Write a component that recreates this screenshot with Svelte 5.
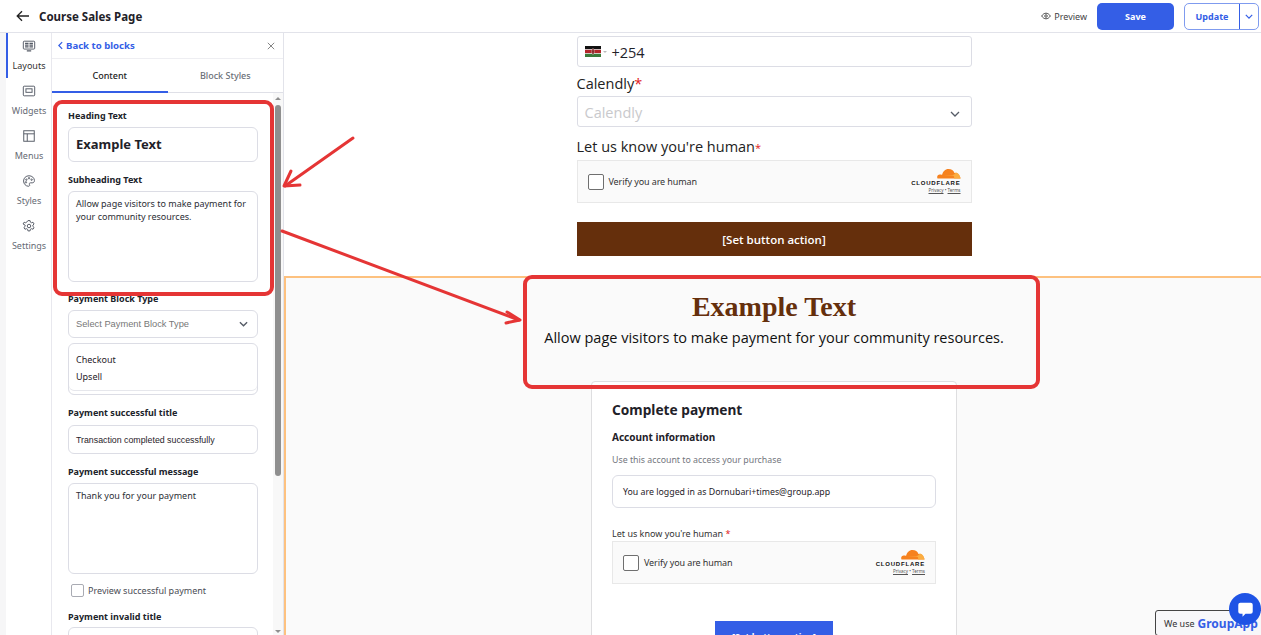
<script>
    const rail_items = [
        { name: "Layouts", icon: "layouts", active: true },
        { name: "Widgets", icon: "widgets" },
        { name: "Menus", icon: "menus" },
        { name: "Styles", icon: "styles" },
        { name: "Settings", icon: "settings" }
    ];
</script>

{#snippet cloudflare()}
    <div class="cf">
        <svg class="cf-cloud" viewBox="0 0 50 22" width="25" height="11">
            <path d="M3 21c-2-5 1-8 6-8 1 0 2 0 3 1 2-7 6-12 13-12 6 0 10 3 12 8 5-1 11 3 12 11z" fill="#f6821f"/>
            <path d="M36 21c1-4 0-6-4-6l-17-.3 18-.7c3 0 5-2 6-5 4 0 9 4 10 12z" fill="#fbad41"/>
        </svg>
        <span class="cf-name">CLOUDFLARE</span>
        <span class="cf-links"><u>Privacy</u> • <u>Terms</u></span>
    </div>
{/snippet}

{#snippet turnstile()}
    <div class="turnstile">
        <span class="ts-box"></span>
        <span class="ts-text">Verify you are human</span>
        {@render cloudflare()}
    </div>
{/snippet}

{#snippet rail_icon(kind)}
    <svg viewBox="0 0 16 16" width="14" height="14" fill="none" stroke="#555b66" stroke-width="1.1">
        {#if kind === "layouts"}
            <rect x="1.5" y="2.5" width="13" height="9" rx="1"/>
            <path d="M3.5 5h4M8.5 5h4M3.5 7h4M8.5 7h4M3.5 9h4M8.5 9h4M5.5 13.5h5" stroke-width="1.3"/>
        {:else if kind === "widgets"}
            <rect x="1.5" y="2.5" width="13" height="11" rx="1"/>
            <rect x="4.5" y="5.5" width="7" height="4"/>
        {:else if kind === "menus"}
            <rect x="2" y="2" width="12" height="12"/>
            <path d="M2 5.5h12M6 5.5V14"/>
        {:else if kind === "styles"}
            <path d="M8 2C4.5 2 1.8 4.6 1.8 8s2.7 6 5.6 6c1.3 0 1.6-1 1.1-1.9-.5-1 0-2 1.2-2h2c1.500 0 2.500-1 2.500-2.600C14.200 4.500 11.500 2 8 2z"/>
            <circle cx="5" cy="6.500" r=".8"/><circle cx="8" cy="4.800" r=".8"/><circle cx="11" cy="6.500" r=".8"/><circle cx="4.500" cy="9.500" r=".8"/>
        {:else}
            <path d="M6.800 1.800h2.400l.4 1.800 1.200.7 1.800-.6 1.200 2-1.400 1.300v1.400l1.400 1.300-1.200 2-1.800-.6-1.200.7-.4 1.800H6.800l-.4-1.800-1.200-.7-1.800.6-1.200-2 1.400-1.300V7.000L1.200 5.700l1.200-2 1.800.6 1.200-.7z"/>
            <circle cx="8" cy="8" r="2"/>
        {/if}
    </svg>
{/snippet}

<div class="page">
    <header class="topbar">
        <svg class="back" viewBox="0 0 14 12" width="14" height="12" fill="none" stroke="#222" stroke-width="1.300">
            <path d="M13 6H1.500M6 1.200 1.200 6 6 10.800"/>
        </svg>
        <h1>Course Sales Page</h1>
        <div class="top-actions">
            <span class="preview">
                <svg viewBox="0 0 16 12" width="10" height="8" fill="none" stroke="#444" stroke-width="1.500">
                    <path d="M1 6c2-3 4.500-4.500 7-4.500S13 3 15 6c-2 3-4.500 4.500-7 4.500S3 9 1 6z"/>
                    <circle cx="8" cy="6" r="2"/>
                </svg>
                Preview
            </span>
            <button class="save">Save</button>
            <div class="update">
                <span class="update-label">Update</span>
                <span class="update-caret">
                    <svg viewBox="0 0 10 6" width="8" height="5" fill="none" stroke="#345ee6" stroke-width="1.500"><path d="M1 1l4 4 4-4"/></svg>
                </span>
            </div>
        </div>
    </header>

    <div class="workspace">
        <div class="gutter"></div>
        <nav class="rail">
            {#each rail_items as item}
                <div class="rail-item" class:active={item.active}>
                    {@render rail_icon(item.icon)}
                    <span>{item.name}</span>
                </div>
            {/each}
        </nav>

        <aside class="panel">
            <div class="panel-head">
                <span class="back-link">
                    <svg viewBox="0 0 6 10" width="5" height="9" fill="none" stroke="#345ee6" stroke-width="1.500"><path d="M5 1 1 5l4 4"/></svg>
                    Back to blocks
                </span>
                <svg viewBox="0 0 10 10" width="8" height="8" fill="none" stroke="#666" stroke-width="1"><path d="M1 1l8 8M9 1 1 9"/></svg>
            </div>
            <div class="tabs">
                <span class="tab current">Content</span>
                <span class="tab">Block Styles</span>
            </div>
            <div class="panel-body">
                <div class="fields">
                    <label class="first">Heading Text</label>
                    <div class="box heading-input">Example Text</div>
                    <label class="l-sub">Subheading Text</label>
                    <div class="box area">Allow page visitors to make payment for your community resources.</div>
                    <label class="l-type">Payment Block Type</label>
                    <div class="box select">
                        <span>Select Payment Block Type</span>
                        <svg viewBox="0 0 10 6" width="9" height="6" fill="none" stroke="#555b66" stroke-width="1.500"><path d="M1 1l4 4 4-4"/></svg>
                    </div>
                    <div class="box options">
                        <span>Checkout</span>
                        <span>Upsell</span>
                    </div>
                    <label class="l-title">Payment successful title</label>
                    <div class="box single">Transaction completed successfully</div>
                    <label class="l-msg">Payment successful message</label>
                    <div class="box area">Thank you for your payment</div>
                    <div class="check-row">
                        <span class="check"></span>
                        <span>Preview successful payment</span>
                    </div>
                    <label class="l-invalid">Payment invalid title</label>
                    <div class="box single"></div>
                </div>
                <div class="scrollbar">
                    <span class="arrow up"></span>
                    <span class="thumb"></span>
                    <span class="arrow down"></span>
                </div>
            </div>
        </aside>

        <main class="canvas">
            <div class="form-block">
                <div class="form">
                    <div class="f-input phone">
                        <svg class="flag" viewBox="0 0 16 11" width="16" height="11">
                            <rect width="16" height="3.600" fill="#111"/>
                            <rect y="3.600" width="16" height="3.800" fill="#b3262a"/>
                            <rect y="7.400" width="16" height="3.600" fill="#3a7a3a"/>
                            <path d="M0 3.500h16M0 7.500h16" stroke="#fff" stroke-width=".6"/>
                            <ellipse cx="8" cy="5.500" rx="1.300" ry="3" fill="#7d1a1a" stroke="#fff" stroke-width=".4"/>
                        </svg>
                        <i class="flag-caret"></i>
                        <span>+254</span>
                    </div>
                    <p class="f-label cal">Calendly<em>*</em></p>
                    <div class="f-input cal-select">
                        <span>Calendly</span>
                        <svg class="cal-caret" viewBox="0 0 10 6" width="10" height="6" fill="none" stroke="#555b66" stroke-width="1.300"><path d="M1 1l4 4 4-4"/></svg>
                    </div>
                    <p class="f-label human">Let us know you're human<em class="small">*</em></p>
                    {@render turnstile()}
                    <button class="action">[Set button action]</button>
                </div>
            </div>
            <section class="pay-section">
                <h2>Example Text</h2>
                <p class="pay-sub">Allow page visitors to make payment for your community resources.</p>
                <div class="pay-card">
                    <h3>Complete payment</h3>
                    <h4>Account information</h4>
                    <p class="hint">Use this account to access your purchase</p>
                    <div class="logged">You are logged in as Dornubari+times@group.app</div>
                    <p class="card-label">Let us know you're human <em>*</em></p>
                    {@render turnstile()}
                    <button class="card-action">[Set button action]</button>
                </div>
            </section>
        </main>
    </div>

    <!-- red marks drawn on top of the screenshot -->
    <svg class="marks" viewBox="0 0 1261 635" width="1261" height="635" fill="none" stroke="#e53535" stroke-width="4" stroke-linecap="round" stroke-linejoin="round">
        <rect x="55" y="102" width="217" height="192" rx="7"/>
        <rect x="525" y="277" width="513" height="110" rx="7"/>
        <g stroke-width="3">
            <path d="M353 138 285 186"/>
            <path d="M291 171 284 186 300 185"/>
            <path d="M282 231 519 320"/>
            <path d="M507 312 520 320 506 323"/>
        </g>
    </svg>

    <div class="cookie">We use <b>GroupApp</b></div>
    <div class="chat">
        <svg viewBox="0 0 20 20" width="17" height="17"><path d="M4 2h12a2.500 2.500 0 0 1 2.500 2.500v8A2.500 2.500 0 0 1 16 15h-6l-3.500 3.500V15H4a2.500 2.500 0 0 1-2.500-2.500v-8A2.500 2.500 0 0 1 4 2z" fill="#fff"/></svg>
    </div>
</div>

<style>
    :global(body){
        margin: 0;
        overflow: hidden;
        background: #fff;
    }

    .page{
        position: relative;
        width: 1261px;
        height: 635px;
        overflow: hidden;
        font-family: "Noto Sans", "Open Sans", sans-serif;
        color: #1f2229;
    }

    /* top bar */
    .topbar{
        height: 32px;
        border-bottom: 1px solid #e2e3ea;
        display: flex;
        align-items: center;
        padding-left: 16px;
    }

    .topbar h1{
        font-size: 11.5px;
        font-weight: 700;
        margin: 0 0 0 9px;
    }

    .top-actions{
        margin-left: auto;
        display: flex;
        align-items: center;
        padding-right: 2px;
    }

    .preview{
        display: flex;
        align-items: center;
        gap: 3px;
        font-size: 9px;
        color: #444;
        margin-right: 10px;
    }

    .save{
        width: 77px;
        height: 27px;
        background: #345ee6;
        color: #fff;
        border: none;
        border-radius: 5px;
        font: 700 9px "Noto Sans", sans-serif;
        margin-right: 10px;
    }

    .update{
        width: 75px;
        height: 27px;
        border: 1px solid #7f9bef;
        border-radius: 5px;
        display: flex;
        box-sizing: border-box;
        color: #345ee6;
        font-size: 9px;
        font-weight: 700;
    }

    .update-label{
        flex: 1;
        display: flex;
        align-items: center;
        justify-content: center;
    }

    .update-caret{
        width: 18px;
        border-left: 1px solid #345ee6;
        display: flex;
        align-items: center;
        justify-content: center;
    }

    .workspace{
        display: flex;
        height: 602px;
    }

    .gutter{
        width: 6px;
        background: #f6f6f7;
    }

    /* icon rail */
    .rail{
        width: 45px;
        border-right: 1px solid #e8e8ee;
        display: flex;
        flex-direction: column;
    }

    .rail-item{
        height: 45px;
        display: flex;
        flex-direction: column;
        align-items: center;
        justify-content: center;
        gap: 6px;
        padding-left: 1px;
        font-size: 9px;
        color: #666b75;
        box-sizing: border-box;
    }

    .rail-item.active{
        border-left: 2px solid #345ee6;
        color: #333;
        padding-left: 0;
        padding-right: 1px;
    }

    /* editing panel */
    .panel{
        width: 231px;
        border-right: 1px solid #e2e3ea;
        display: flex;
        flex-direction: column;
        flex-shrink: 0;
        box-sizing: content-box;
    }

    .panel-head{
        height: 25px;
        border-bottom: 1px solid #eeeef2;
        display: flex;
        align-items: center;
        justify-content: space-between;
        padding: 0 8px 0 6px;
    }

    .back-link{
        display: flex;
        align-items: center;
        gap: 3px;
        color: #345ee6;
        font-size: 9.6px;
        font-weight: 700;
    }

    .tabs{
        height: 33px;
        display: flex;
        border-bottom: 1px solid #dfe0e7;
    }

    .tab{
        flex: 1;
        font-size: 9px;
        font-weight: 500;
        color: #6b6f78;
        display: flex;
        align-items: center;
        justify-content: center;
    }

    .tab.current{
        color: #222;
        border-bottom: 2px solid #345ee6;
        margin-bottom: -1px;
    }

    .panel-body{
        flex: 1;
        display: flex;
        overflow: hidden;
    }

    .fields{
        flex: 1;
        padding: 0 15px 0 16px;
        display: flex;
        flex-direction: column;
        overflow: hidden;
    }

    .fields label{
        font-size: 9px;
        font-weight: 700;
        line-height: 12px;
        color: #20232a;
    }

    .fields .first{ margin-top: 17px; margin-bottom: 5px; }
    .fields .l-sub{ margin-top: 12px; margin-bottom: 5px; }
    .fields .l-type{ margin-top: 11px; margin-bottom: 5px; }
    .fields .l-title{ margin-top: 12px; margin-bottom: 6px; }
    .fields .l-msg{ margin-top: 12px; margin-bottom: 5px; }
    .fields .l-invalid{ margin-top: 14px; margin-bottom: 4px; }

    .box{
        border: 1px solid #dcdde5;
        border-radius: 6px;
        box-sizing: border-box;
        flex-shrink: 0;
        font-size: 9px;
        padding: 0 7px;
    }

    .heading-input{
        height: 35px;
        display: flex;
        align-items: center;
        padding-bottom: 2px;
        font-size: 13px;
        font-weight: 700;
    }

    .area{
        height: 91px;
        padding-top: 6px;
        line-height: 12.500px;
        color: #2b2e35;
    }

    .select{
        height: 28px;
        display: flex;
        align-items: center;
        justify-content: space-between;
        color: #777;
        font-family: "Liberation Sans", sans-serif;
        font-size: 9.3px;
        padding-right: 9px;
    }

    .options{
        height: 52px;
        margin-top: 5px;
        padding-top: 10px;
        display: flex;
        flex-direction: column;
        gap: 5px;
        line-height: 12px;
        box-shadow: inset 0 -3px 0 #fff, inset 0 -4px 0 #e6e7ec;
    }

    .single{
        height: 29px;
        display: flex;
        align-items: center;
        font-family: "Liberation Sans", sans-serif;
        font-size: 8.8px;
    }

    .check-row{
        display: flex;
        align-items: center;
        gap: 4px;
        margin: 10px 0 0 3px;
        font-size: 9px;
        color: #4a4d55;
        height: 14px;
    }

    .check{
        width: 13px;
        height: 13px;
        border: 1px solid #a9abb3;
        border-radius: 2px;
        box-sizing: border-box;
    }

    .scrollbar{
        width: 10px;
        background: #f8f8f8;
        display: flex;
        flex-direction: column;
        align-items: center;
        flex-shrink: 0;
        padding-top: 4px;
    }

    .thumb{
        width: 6px;
        height: 371px;
        margin-top: 5px;
        background: #8f8f8f;
        border-radius: 3px;
    }

    .arrow{
        width: 0;
        height: 0;
        border-left: 3px solid transparent;
        border-right: 3px solid transparent;
    }

    .arrow.up{ border-bottom: 3px solid #8f8f8f; }
    .arrow.down{ border-top: 3px solid #8f8f8f; margin-top: auto; margin-bottom: 2px; }

    /* page preview */
    .canvas{
        flex: 1;
        display: flex;
        flex-direction: column;
        overflow: hidden;
        font-family: "Open Sans", sans-serif;
    }

    .form-block{
        height: 243px;
        flex-shrink: 0;
        display: flex;
        justify-content: center;
        padding-left: 3px;
        box-sizing: border-box;
    }

    .form{
        width: 395px;
        padding-top: 3px;
    }

    .f-input{
        height: 31px;
        border: 1px solid #dcdde5;
        border-radius: 3px;
        box-sizing: border-box;
        display: flex;
        align-items: center;
        font-size: 14.5px;
        padding: 0 7px;
    }

    .flag{
        margin-right: 2px;
    }

    .flag-caret{
        width: 0;
        height: 0;
        border-left: 2px solid transparent;
        border-right: 2px solid transparent;
        border-top: 2px solid #bbb;
        margin-right: 5px;
    }

    .phone span{
        padding-top: 1px;
    }

    .cal-select{
        justify-content: space-between;
        color: #c9c9cc;
        padding-right: 11px;
    }

    .cal-select span{
        padding-top: 1px;
    }

    .cal-caret{
        margin-top: 5px;
    }

    .f-label{
        margin: 0;
        font-size: 14.5px;
        line-height: 20px;
        color: #222;
    }

    .f-label em, .card-label em{
        color: #e02020;
        font-style: normal;
    }

    .f-label em.small{
        font-size: 11px;
    }

    .cal{ margin-top: 7px; margin-bottom: 2px; }
    .human{ margin-top: 10px; margin-bottom: 2px; }

    .turnstile{
        height: 43px;
        background: #fafafa;
        border: 1px solid #e8e8e8;
        box-sizing: border-box;
        display: flex;
        align-items: center;
        padding: 0 10px;
        font-family: "Noto Sans", sans-serif;
    }

    .ts-box{
        width: 16px;
        height: 16px;
        border: 1px solid #6f6f6f;
        border-radius: 2px;
        box-sizing: border-box;
        background: #fff;
        margin-right: 5px;
    }

    .ts-text{
        font-size: 9px;
        color: #333;
        letter-spacing: -.1px;
    }

    .cf{
        margin-left: auto;
        display: flex;
        flex-direction: column;
        align-items: flex-end;
        line-height: 1;
        margin-top: -3px;
    }

    .cf-cloud{
        display: block;
    }

    .cf-name{
        font: 700 6px "Liberation Sans", sans-serif;
        letter-spacing: .8px;
        color: #111;
        margin-top: 1px;
    }

    .cf-links{
        font-size: 4.500px;
        color: #555;
        margin-top: 2px;
    }

    .action{
        display: block;
        width: 100%;
        height: 34px;
        margin-top: 19px;
        border: none;
        background: #652f0c;
        color: #fff;
        font: 600 11.5px "Open Sans", sans-serif;
    }

    .pay-section{
        flex: 1;
        background: #fafafa;
        border-top: 2px solid #fdc17f;
        border-left: 2px solid #fdc17f;
        display: flex;
        flex-direction: column;
        align-items: center;
        box-sizing: border-box;
        padding-left: 1px;
    }

    .pay-section h2{
        margin: 12px 0 0;
        font: 700 28px/34px "Liberation Serif", serif;
        color: #652f0c;
    }

    .pay-sub{
        margin: 4px 0 0;
        font-size: 14.5px;
        line-height: 20px;
        color: #111;
    }

    .pay-card{
        width: 366px;
        height: 300px;
        flex-shrink: 0;
        margin-top: 33px;
        background: #fff;
        border: 1px solid #dedee0;
        border-radius: 4px;
        box-sizing: border-box;
        padding: 0 20px;
        font-family: "Noto Sans", sans-serif;
    }

    .pay-card h3{
        margin: 19px 0 0;
        font-size: 13.7px;
        line-height: 18px;
        font-weight: 700;
    }

    .pay-card h4{
        margin: 11px 0 0;
        font-size: 10px;
        line-height: 14px;
        font-weight: 700;
    }

    .hint{
        margin: 10px 0 0;
        font-size: 8.8px;
        line-height: 12px;
        color: #73767d;
    }

    .logged{
        margin-top: 9px;
        height: 33px;
        border: 1px solid #dcdde5;
        border-radius: 6px;
        box-sizing: border-box;
        display: flex;
        align-items: center;
        padding: 0 10px;
        font-size: 8.8px;
    }

    .card-label{
        margin: 20px 0 1px;
        font-size: 9px;
        line-height: 12px;
        color: #333;
    }

    .card-action{
        display: block;
        width: 118px;
        height: 30px;
        margin: 37px auto 0;
        border: none;
        background: #345ee6;
        color: #fff;
        font: 700 9px "Noto Sans", sans-serif;
    }

    /* overlays */
    .marks{
        position: absolute;
        left: 0;
        top: 0;
        pointer-events: none;
    }

    .cookie{
        position: absolute;
        left: 1155px;
        top: 610px;
        width: 120px;
        height: 26px;
        background: #f7f7f9;
        border: 1px solid #444;
        border-radius: 3px;
        box-sizing: border-box;
        display: flex;
        align-items: center;
        gap: 3px;
        padding-left: 8px;
        font: 9px "Noto Sans", sans-serif;
        color: #333;
    }

    .cookie b{
        color: #345ee6;
        font-size: 12px;
    }

    .chat{
        position: absolute;
        left: 1229px;
        top: 593px;
        width: 32px;
        height: 32px;
        border-radius: 50%;
        background: #1e53e5;
        display: flex;
        align-items: center;
        justify-content: center;
    }
</style>
